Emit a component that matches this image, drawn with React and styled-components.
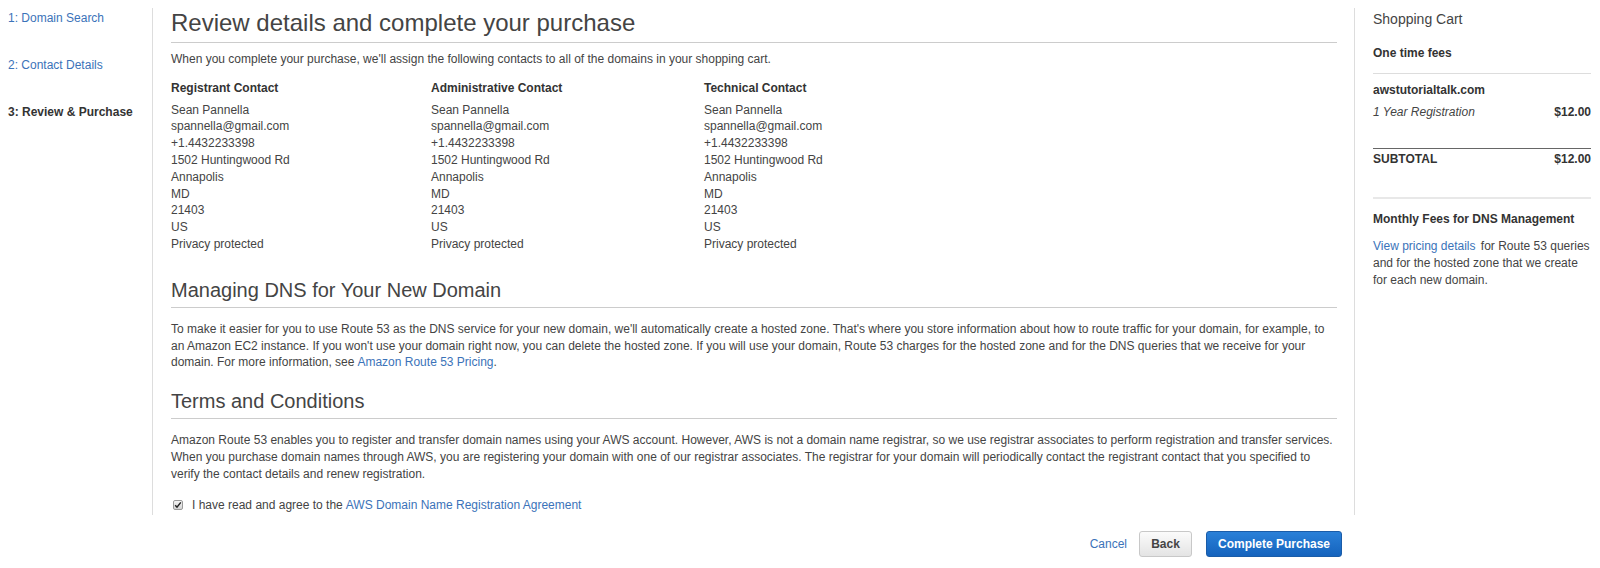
import styled, { createGlobalStyle } from "styled-components";

const GlobalStyle = createGlobalStyle`
  body {
    margin: 0;
    background: #fff;
    font-family: "Liberation Sans", Arial, sans-serif;
    font-size: 12px;
    color: #444;
  }
`;

const Page = styled.div`
  width: 1600px;
  height: 568px;
  box-sizing: border-box;
  padding-top: 8px;
  overflow: hidden;
`;

const Columns = styled.div`
  display: flex;
  align-items: stretch;
  height: 507px;
`;

const Nav = styled.nav`
  width: 153px;
  box-sizing: border-box;
  padding: 2px 0 0 8px;
  border-right: 1px solid #ddd;
  display: flex;
  flex-direction: column;
  gap: 30px;
`;

const Step = styled.a`
  display: block;
  line-height: 17px;
  font-size: 12px;
  color: ${(p) => (p.active ? "#333" : "#3b73b9")};
  font-weight: ${(p) => (p.active ? 700 : 400)};
  text-decoration: none;
`;

const Main = styled.main`
  width: 1202px;
  box-sizing: border-box;
  padding: 0 17px 0 18px;
  border-right: 1px solid #ddd;
`;

const H1 = styled.h1`
  margin: 0;
  font-size: 24px;
  font-weight: 400;
  line-height: 29px;
  color: #444;
  padding-bottom: 5px;
  border-bottom: 1px solid #ccc;
`;

const H2 = styled.h2`
  margin: ${(p) => p.top || 0}px 0 0;
  font-size: 20px;
  font-weight: 400;
  line-height: 24px;
  color: #444;
  padding-bottom: 5px;
  border-bottom: 1px solid #ccc;
`;

const P = styled.p`
  margin: ${(p) => p.top || 0}px 0 0;
  line-height: 16.8px;
`;

const Link = styled.a`
  color: #3b73b9;
  text-decoration: none;
  margin-left: ${(p) => (p.flush ? 0 : 3)}px;
  margin-right: ${(p) => p.after || 0}px;
`;

const Contacts = styled.div`
  display: grid;
  grid-template-columns: 260px 273px 1fr;
  margin-top: 12px;
`;

const Contact = styled.div``;

const ContactTitle = styled.div`
  font-weight: 700;
  color: #333;
  line-height: 16.8px;
  margin-bottom: 5px;
`;

const Line = styled.div`
  line-height: 16.8px;
`;

const Agree = styled.div`
  display: flex;
  align-items: center;
  margin-top: 14px;
  line-height: 16.8px;
`;

const Check = styled.span`
  width: 8px;
  height: 8px;
  border: 1px solid #9a9a9a;
  border-radius: 2px;
  background: linear-gradient(#f4f4f4, #d4d4d4);
  margin: 0 9px 0 2px;
  display: flex;
  align-items: center;
  justify-content: center;
`;

const Cart = styled.aside`
  width: 236px;
  box-sizing: border-box;
  padding-left: 18px;
`;

const CartTitle = styled.div`
  font-size: 14px;
  line-height: 20px;
  margin-top: 1px;
  color: #444;
`;

const Bold = styled.div`
  font-weight: 700;
  color: #333;
  line-height: 17px;
  margin-top: ${(p) => p.top || 0}px;
`;

const Rule = styled.div`
  height: 0;
  border-top: ${(p) => p.w || 1}px solid ${(p) => p.c || "#ddd"};
  margin-top: ${(p) => p.top || 0}px;
`;

const Row = styled.div`
  display: flex;
  justify-content: space-between;
  line-height: 17px;
  margin-top: ${(p) => p.top || 0}px;
  font-weight: ${(p) => (p.bold ? 700 : 400)};
  color: ${(p) => (p.bold ? "#333" : "#444")};
`;

const Italic = styled.span`
  font-style: italic;
`;

const Price = styled.span`
  font-weight: 700;
  color: #333;
`;

const Note = styled.p`
  margin: 10px -2px 0 0;
  line-height: 17px;
`;

const Footer = styled.div`
  width: 1342px;
  display: flex;
  justify-content: flex-end;
  align-items: center;
  margin-top: 16px;
`;

const Cancel = styled.a`
  color: #3b73b9;
  text-decoration: none;
  margin-right: 12px;
`;

const Button = styled.button`
  height: 26px;
  padding: 0;
  margin-left: ${(p) => (p.primary ? 14 : 0)}px;
  width: ${(p) => (p.primary ? 136 : 53)}px;
  border-radius: 3px;
  font-family: "Liberation Sans", Arial, sans-serif;
  font-size: 12px;
  font-weight: 700;
  cursor: pointer;
  border: 1px solid ${(p) => (p.primary ? "#1a5ca8" : "#c8c8c8")};
  color: ${(p) => (p.primary ? "#fff" : "#444")};
  background: ${(p) =>
    p.primary
      ? "linear-gradient(#2a80d8, #1563bd)"
      : "linear-gradient(#fbfbfb, #e4e4e4)"};
`;

const fields = [
  "Sean Pannella",
  "spannella@gmail.com",
  "+1.4432233398",
  "1502 Huntingwood Rd",
  "Annapolis",
  "MD",
  "21403",
  "US",
  "Privacy protected",
];

const contactTypes = ["Registrant Contact", "Administrative Contact", "Technical Contact"];

export default function App() {
  return (
    <Page>
      <GlobalStyle />
      <Columns>
        <Nav>
          <Step>1: Domain Search</Step>
          <Step>2: Contact Details</Step>
          <Step active>3: Review &amp; Purchase</Step>
        </Nav>
        <Main>
          <H1>Review details and complete your purchase</H1>
          <P top={8}>
            When you complete your purchase, we'll assign the following contacts to all of the domains in your shopping cart.
          </P>
          <Contacts>
            {contactTypes.map((t) => (
              <Contact key={t}>
                <ContactTitle>{t}</ContactTitle>
                {fields.map((f) => (
                  <Line key={f}>{f}</Line>
                ))}
              </Contact>
            ))}
          </Contacts>
          <H2 top={25}>Managing DNS for Your New Domain</H2>
          <P top={13}>
            To make it easier for you to use Route 53 as the DNS service for your new domain, we'll automatically create a hosted zone. That's where you store information about how to route traffic for your domain, for example, to an Amazon EC2 instance. If you won't use your domain right now, you can delete the hosted zone. If you will use your domain, Route 53 charges for the hosted zone and for the DNS queries that we receive for your domain. For more information, see
            <Link>Amazon Route 53 Pricing</Link>.
          </P>
          <H2 top={18}>Terms and Conditions</H2>
          <P top={13}>
            Amazon Route 53 enables you to register and transfer domain names using your AWS account. However, AWS is not a domain name registrar, so we use registrar associates to perform registration and transfer services. When you purchase domain names through AWS, you are registering your domain with one of our registrar associates. The registrar for your domain will periodically contact the registrant contact that you specified to verify the contact details and renew registration.
          </P>
          <Agree>
            <Check>
              <svg width="8" height="8" viewBox="0 0 8 8">
                <path d="M1.2 4.2 L3 6.2 L6.8 1.4" fill="none" stroke="#222" strokeWidth="1.5" />
              </svg>
            </Check>
            I have read and agree to the
            <Link>AWS Domain Name Registration Agreement</Link>
          </Agree>
        </Main>
        <Cart>
          <CartTitle>Shopping Cart</CartTitle>
          <Bold top={16}>One time fees</Bold>
          <Rule top={11} />
          <Bold top={8}>awstutorialtalk.com</Bold>
          <Row top={5}>
            <Italic>1 Year Registration</Italic>
            <Price>$12.00</Price>
          </Row>
          <Rule top={27} c="#666" />
          <Row top={2} bold>
            <span>SUBTOTAL</span>
            <span>$12.00</span>
          </Row>
          <Rule top={29} w={2} c="#e8e8e8" />
          <Bold top={12}>Monthly Fees for DNS Management</Bold>
          <Note>
            <Link flush after={2}>View pricing details</Link> for Route 53 queries and for the hosted zone that we create for each new domain.
          </Note>
        </Cart>
      </Columns>
      <Footer>
        <Cancel>Cancel</Cancel>
        <Button>Back</Button>
        <Button primary>Complete Purchase</Button>
      </Footer>
    </Page>
  );
}
